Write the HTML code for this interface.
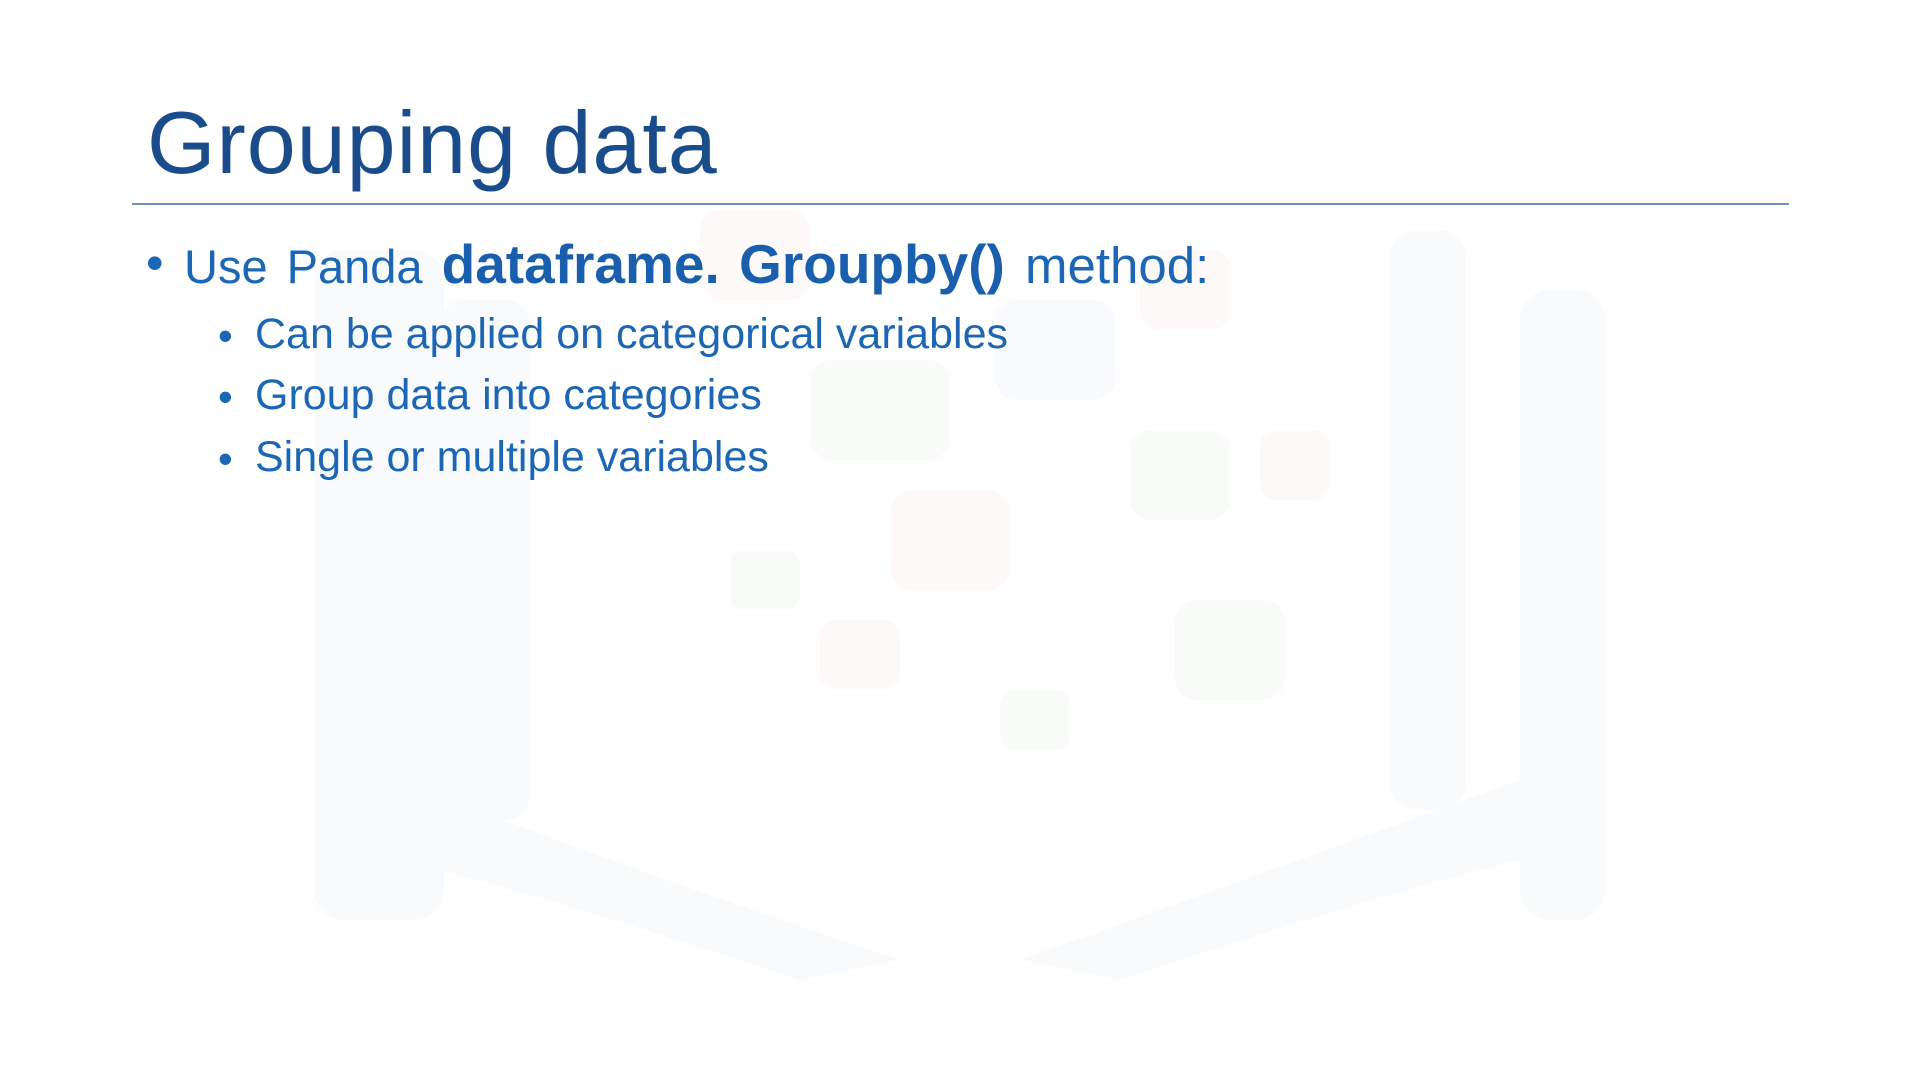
<!DOCTYPE html>
<html><head><meta charset="utf-8"><style>
html,body{margin:0;padding:0;}
body{width:1920px;height:1080px;background:#fff;position:relative;overflow:hidden;font-family:"Liberation Sans",sans-serif;}
.bg{position:absolute;left:0;top:0;}
h1{position:absolute;left:147px;top:88px;margin:0;font-weight:normal;font-size:88px;color:#1a4c8c;letter-spacing:1px;line-height:110px;}
.rule{position:absolute;left:132px;top:203px;width:1657px;height:2px;background:#6f8fc4;}
.t{position:absolute;color:#1c66b6;white-space:nowrap;}
.l1{left:184px;top:232px;font-size:47px;word-spacing:6px;}
.l1 b{font-size:55px;color:#1a5fae;word-spacing:4px;}
.l1 .m{font-size:51px;}
.d{position:absolute;color:#1c66b6;}
.s{font-size:43px;left:255px;}
</style></head><body>
<svg class="bg" width="1920" height="1080">
 <g fill="#f9fafb">
  <rect x="314" y="250" width="130" height="670" rx="30"/>
  <rect x="440" y="300" width="90" height="520" rx="25"/>
  <rect x="1390" y="230" width="75" height="580" rx="25"/>
  <rect x="1520" y="290" width="85" height="630" rx="30"/>
  <path d="M400 780 Q600 860 900 960 L800 980 Q560 900 400 860Z"/>
  <path d="M1520 780 Q1300 860 1020 960 L1120 980 Q1360 900 1520 860Z"/>
 </g>
 <g fill="#fdf9f9"><rect x="700" y="210" width="110" height="90" rx="20"/><rect x="890" y="490" width="120" height="100" rx="22"/><rect x="820" y="620" width="80" height="70" rx="16"/><rect x="1140" y="250" width="90" height="80" rx="18"/><rect x="1260" y="430" width="70" height="70" rx="16"/></g>
 <g fill="#f9fbf9"><rect x="810" y="360" width="140" height="100" rx="22"/><rect x="1130" y="430" width="100" height="90" rx="20"/><rect x="1175" y="600" width="110" height="100" rx="22"/><rect x="730" y="550" width="70" height="60" rx="14"/><rect x="1000" y="690" width="70" height="60" rx="14"/></g>
 <g fill="#f8fafd"><rect x="995" y="300" width="120" height="100" rx="22"/></g>
</svg>
<h1>Grouping data</h1>
<div class="rule"></div>
<div class="d" style="left:146px;top:234px;font-size:50px;">•</div>
<div class="t l1">Use Panda <b>dataframe. Groupby()</b><span class="m"> method:</span></div>
<div class="d" style="left:218px;top:312px;font-size:42px;">•</div>
<div class="t s" style="top:310px;">Can be applied on categorical variables</div>
<div class="d" style="left:218px;top:373px;font-size:42px;">•</div>
<div class="t s" style="top:371px;">Group data into categories</div>
<div class="d" style="left:218px;top:435px;font-size:42px;">•</div>
<div class="t s" style="top:433px;">Single or multiple variables</div>
</body></html>
